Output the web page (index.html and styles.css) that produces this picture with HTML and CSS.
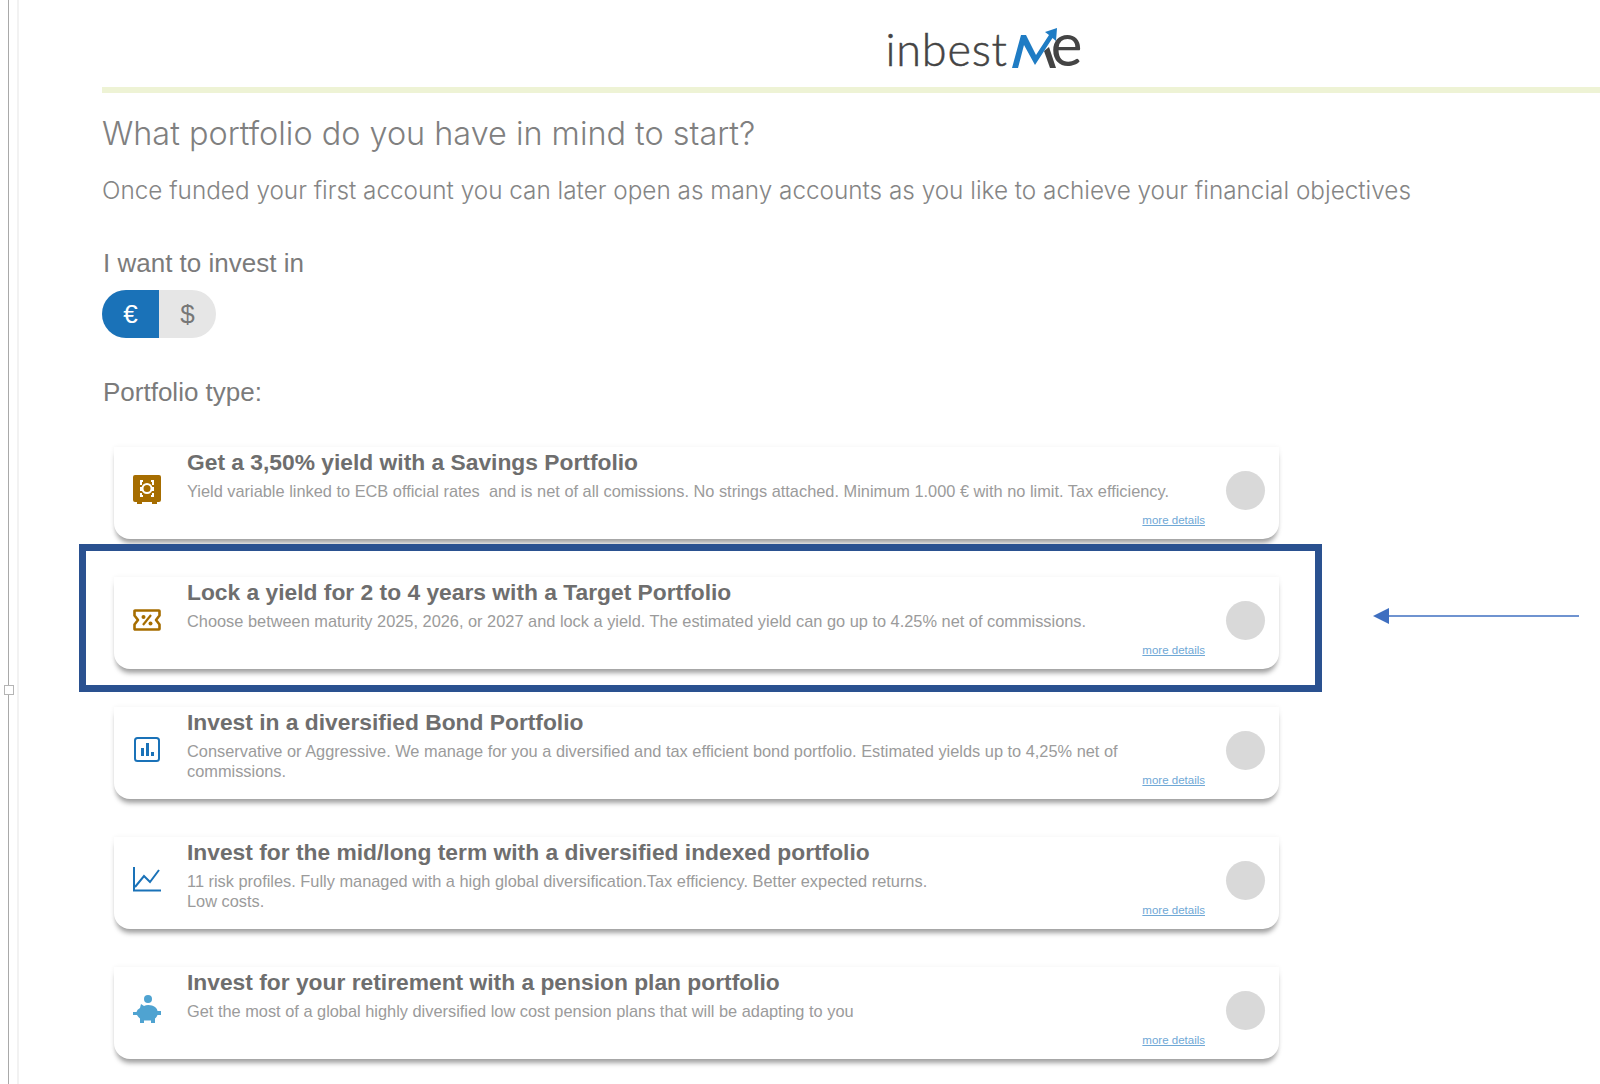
FILE: index.html
```html
<!DOCTYPE html>
<html lang="en">
<head>
  <meta charset="UTF-8">
  <meta name="viewport" content="width=device-width, initial-scale=1.0">
  <title>inbestMe - Portfolio</title>
  <link rel="stylesheet" href="styles.css">
</head>
<body>
  <div class="ruler"><span class="ruler-handle"></span></div>

  <header class="logo">
    <span class="logo-word">inbest</span>
    <svg class="logo-m" width="46" height="42" viewBox="0 0 46 42">
      <path d="M37 20 L44 41 H38 L32 24 Z" fill="#444"/>
      <path d="M0 41 L9 8 H14 L24 28 L37 8 L33 5 L45 1 L44 14 L40.500 11 L23 38 L12 18 L6 41 Z" fill="#1f7cc4"/>
    </svg>
    <span class="logo-e">e</span>
  </header>
  <div class="logo-rule"></div>

  <main class="content">
    <h1>What portfolio do you have in mind to start?</h1>
    <p class="lead">Once funded your first account you can later open as many accounts as you like to achieve your financial objectives</p>

    <h2 class="label">I want to invest in</h2>
    <div class="currency">
      <span class="currency-item active">€</span>
      <span class="currency-item">$</span>
    </div>

    <h2 class="label type-label">Portfolio type:</h2>

    <div class="cards">
      <section class="card">
        <span class="icon">
          <svg width="28" height="29" viewBox="0 0 28 29">
            <path d="M2 0 H26 Q28 0 28 2 V25 Q28 27 26 27 H24 V29 H19 V27 H9 V29 H4 V27 H2 Q0 27 0 25 V2 Q0 0 2 0 Z" fill="#a66d00"/>
            <circle cx="14" cy="13.500" r="4.500" fill="none" stroke="#fff" stroke-width="2"/>
            <path d="M7 6 H10 M18 6 H21 M7 21 H10 M18 21 H21 M8 6 V21 M20 6 V21" fill="none" stroke="#fff" stroke-width="2" stroke-dasharray="4 2"/>
          </svg>
        </span>
        <div class="card-body">
          <h3>Get a 3,50% yield with a Savings Portfolio</h3>
          <p>Yield variable linked to ECB official rates&nbsp; and is net of all comissions. No strings attached. Minimum 1.000 € with no limit. Tax efficiency.</p>
          <a href="#" class="more">more details</a>
        </div>
        <span class="radio"></span>
      </section>

      <section class="card">
        <span class="icon">
          <svg width="28" height="22" viewBox="0 0 28 22">
            <path d="M2 1.500 H26 Q26.500 1.500 26.500 2 V6.500 L23 11 L26.500 15.500 V20 Q26.500 20.500 26 20.500 H2 Q1.500 20.500 1.500 20 V15.500 L5 11 L1.500 6.500 V2 Q1.500 1.500 2 1.500 Z" fill="none" stroke="#a66d00" stroke-width="2.600" stroke-linejoin="round"/>
            <path d="M10 16 L18 6" stroke="#a66d00" stroke-width="2.200"/>
            <circle cx="10.500" cy="8" r="2" fill="#a66d00"/>
            <circle cx="17.500" cy="14.500" r="2" fill="#a66d00"/>
          </svg>
        </span>
        <div class="card-body">
          <h3>Lock a yield for 2 to 4 years with a Target Portfolio</h3>
          <p>Choose between maturity 2025, 2026, or 2027 and lock a yield. The estimated yield can go up to 4.25% net of commissions.</p>
          <a href="#" class="more">more details</a>
        </div>
        <span class="radio"></span>
      </section>

      <section class="card">
        <span class="icon">
          <svg width="26" height="25" viewBox="0 0 26 25">
            <rect x="1" y="1" width="24" height="23" rx="2.500" fill="none" stroke="#1a72b8" stroke-width="2"/>
            <path d="M7 11 H10 V19 H7 Z M12 6 H15 V19 H12 Z M17 15 H20 V19 H17 Z" fill="#1a72b8"/>
          </svg>
        </span>
        <div class="card-body">
          <h3>Invest in a diversified Bond Portfolio</h3>
          <p>Conservative or Aggressive. We manage for you a diversified and tax efficient bond portfolio. Estimated yields up to 4,25% net of commissions.</p>
          <a href="#" class="more">more details</a>
        </div>
        <span class="radio"></span>
      </section>

      <section class="card">
        <span class="icon">
          <svg width="28" height="25" viewBox="0 0 28 25">
            <path d="M1 0 V23.500 H28" fill="none" stroke="#1a72b8" stroke-width="2"/>
            <path d="M2 20 L11 9 L17 15 L26 3" fill="none" stroke="#1a72b8" stroke-width="2"/>
          </svg>
        </span>
        <div class="card-body">
          <h3>Invest for the mid/long term with a diversified indexed portfolio</h3>
          <p>11 risk profiles. Fully managed with a high global diversification.Tax efficiency. Better expected returns.<br>Low costs.</p>
          <a href="#" class="more">more details</a>
        </div>
        <span class="radio"></span>
      </section>

      <section class="card">
        <span class="icon">
          <svg width="28" height="29" viewBox="0 0 28 29">
            <circle cx="15" cy="4" r="4" fill="#4fa3d1"/>
            <path d="M8 9 L11 11 Q14 9.500 19 10.500 Q24 12 24.500 16 H28 V20 H24.500 Q23.500 22.500 22 23.500 V28 H18 V25.500 H11 V28 H7 V23.500 Q5 22 4 20 H0 V17 H3.500 Q4 14.500 7 13 Z" fill="#4fa3d1"/>
          </svg>
        </span>
        <div class="card-body">
          <h3>Invest for your retirement with a pension plan portfolio</h3>
          <p>Get the most of a global highly diversified low cost pension plans that will be adapting to you</p>
          <a href="#" class="more">more details</a>
        </div>
        <span class="radio"></span>
      </section>
    </div>
  </main>

  <!-- review markup on top of the screenshot -->
  <div class="highlight"></div>
  <svg class="arrow" width="206" height="16" viewBox="0 0 206 16">
    <path d="M0 8 L16 0 V16 Z" fill="#3f6fc0"/>
    <path d="M14 8 H206" stroke="#3f6fc0" stroke-width="1.500"/>
  </svg>
</body>
</html>
```

FILE: styles.css
```css
html, body {
  margin: 0;
  padding: 0;
}
body {
  position: relative;
  height: 1084px;
  overflow: hidden;
  background-color: white;
  font-family: "Liberation Sans", Arial, sans-serif;
  color: #808080;
}
.ruler {
  position: absolute;
  left: 8px;
  top: 0;
  bottom: 0;
  width: 8px;
  border-left: 1px solid #a9a9a9;
  border-right: 2px solid #f2f2f2;
}
.ruler-handle {
  position: absolute;
  left: -5px;
  top: 685px;
  width: 8px;
  height: 8px;
  background-color: white;
  border: 1px solid #b5b5b5;
}
.logo {
  display: flex;
  align-items: baseline;
  justify-content: center;
  height: 87px;
  padding-left: 368px;
  box-sizing: border-box;
  font-family: Lato, sans-serif;
  color: #444;
}
.logo-word {
  font-size: 45px;
  font-weight: 300;
  line-height: 87px;
  letter-spacing: 0.800px;
  -webkit-text-stroke: 0.500px #444;
}
.logo-m {
  margin-left: 4px;
  align-self: flex-start;
  margin-top: 27px;
}
.logo-e {
  margin-left: -7px;
  font-size: 60px;
  line-height: 87px;
}
.logo-rule {
  height: 6px;
  margin-left: 102px;
  background-color: #eef3d5;
}
.content {
  padding-left: 103px;
}
h1 {
  margin: 22px 0 0 -1px;
  font-family: Inter, "Liberation Sans", sans-serif;
  font-size: 32.400px;
  font-weight: 300;
  line-height: 38px;
  color: #808080;
}
.lead {
  margin: 18px 0 0 -1px;
  font-family: Inter, "Liberation Sans", sans-serif;
  font-size: 24.300px;
  font-weight: 300;
  line-height: 38px;
  color: #858585;
}
.label {
  margin: 35px 0 0;
  font-size: 26px;
  font-weight: normal;
  line-height: 38px;
  color: #7b7b7b;
}
.currency {
  display: flex;
  width: 114px;
  height: 48px;
  margin: 8px 0 0 -1px;
  border-radius: 24px;
  overflow: hidden;
  background-color: #e6e6e6;
}
.currency-item {
  display: flex;
  align-items: center;
  justify-content: center;
  width: 57px;
  font-size: 26px;
  color: #777;
}
.currency-item.active {
  background-color: #1a72b8;
  color: white;
}
.type-label {
  margin-top: 35px;
}
.cards {
  display: flex;
  flex-direction: column;
  gap: 37px;
  width: 1165px;
  margin: 36px 0 0 11px;
}
.card {
  display: flex;
  align-items: center;
  height: 92px;
  margin-bottom: 1px;
  border-radius: 0 0 16px 16px;
  background-color: white;
  box-shadow: 0 6px 5px -2px rgba(0, 0, 0, 0.36), 0 0 5px rgba(0, 0, 0, 0.05);
}
.icon {
  flex: none;
  display: flex;
  justify-content: center;
  width: 28px;
  margin: 0 26px 7px 19px;
}
.card-body {
  flex: 1;
  display: flex;
  flex-direction: column;
  height: 92px;
  box-sizing: border-box;
  padding-top: 2px;
}
.card h3 {
  margin: 0;
  font-size: 22.800px;
  line-height: 26px;
  color: #6e6e6e;
}
.card p {
  margin: 7px 0 0;
  max-width: 1000px;
  font-size: 16.370px;
  line-height: 19.500px;
  color: #9b9b9b;
}
.more {
  position: absolute;
  align-self: flex-end;
  margin-top: 64px;
  font-size: 11.500px;
  line-height: 14px;
  color: #6fa8d6;
}
.radio {
  flex: none;
  width: 39px;
  height: 39px;
  margin: 0 14px 6px 21px;
  border-radius: 50%;
  background-color: #d9d9d9;
}
.highlight {
  position: absolute;
  left: 79px;
  top: 544px;
  width: 1229px;
  height: 134px;
  border: 7px solid #2a5190;
}
.arrow {
  position: absolute;
  left: 1373px;
  top: 608px;
}
```
